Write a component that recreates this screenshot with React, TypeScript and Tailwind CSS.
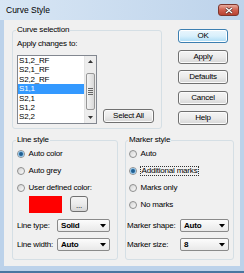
import React from "react";

function Btn({ label, primary = false, className = "" }: { label: string; primary?: boolean; className?: string }) {
  return (
    <div
      className={
        "h-[14px] flex items-center justify-center rounded-[3px] border " +
        (primary
          ? "border-[#3c7fb1] bg-linear-to-b from-[#eaf6fd] via-[#d9f0fc] to-[#a9dbf6] shadow-[inset_0_0_0_1px_#ffffff]"
          : "border-[#707070] bg-linear-to-b from-[#f4f4f4] via-[#ebebeb] to-[#d6d6d6] shadow-[inset_0_0_0_1px_#fbfbfb]") +
        " " +
        className
      }
    >
      {label}
    </div>
  );
}

function Radio({ checked = false }: { checked?: boolean }) {
  return (
    <span className="w-[8px] h-[8px] shrink-0 rounded-full border border-[#8e8f8f] bg-linear-to-br from-[#d4d4d4] to-[#fbfbfb] flex items-center justify-center">
      {checked && <span className="w-[4px] h-[4px] rounded-full bg-[#1f5e91] shadow-[0_0_0_1px_#8fc1e6]" />}
    </span>
  );
}

function Select({ value, className = "" }: { value: string; className?: string }) {
  return (
    <div
      className={
        "h-[13px] flex items-center rounded-[2px] border border-[#8a8a8a] bg-linear-to-b from-[#fcfcfc] to-[#e9e9e9] " + className
      }
    >
      <span className="flex-1 pl-[3px] font-bold">{value}</span>
      <svg width="6" height="4" viewBox="0 0 6 4" className="mr-[3px]">
        <path d="M0 0 H6 L3 3.5 Z" fill="#000" />
      </svg>
    </div>
  );
}

function RadioRow({ label, checked = false, focus = false, className = "" }: { label: string; checked?: boolean; focus?: boolean; className?: string }) {
  return (
    <div className={"h-[17px] flex items-center gap-[3.5px] " + className}>
      <Radio checked={checked} />
      {focus ? (
        <span className="border border-dotted border-[#333] px-[1px] -ml-[1px] leading-[8px]">{label}</span>
      ) : (
        <span>{label}</span>
      )}
    </div>
  );
}

const items = ["S1,2_RF", "S2,1_RF", "S2,2_RF", "S1,1", "S2,1", "S1,2", "S2,2"];

export default function App() {
  return (
    <div className="w-[244px] h-[273px] flex flex-col bg-[#bcd2ea] border-b-2 border-[#4a76a0] [font-family:'Liberation_Sans',Arial,sans-serif] text-[8px] tracking-[-0.2px] text-black leading-[10px] overflow-hidden">
      {/* Title bar */}
      <div className="h-[20px] shrink-0 flex items-center bg-linear-to-r from-[#d8e6f4] to-[#bdd3eb]">
        <span className="ml-[6px] text-[8.5px] tracking-normal">Curve Style</span>
        <div className="ml-auto mr-[5px] w-[21px] h-[12px] rounded-[3px] border border-[#7d362d] bg-linear-to-b from-[#e6aa9e] via-[#cf5f4f] to-[#b7402f] flex items-center justify-center">
          <svg width="8" height="7" viewBox="0 0 8 7">
            <path d="M1 1 L7 6 M7 1 L1 6" stroke="#4a2a26" strokeWidth="2.6" />
            <path d="M1 1 L7 6 M7 1 L1 6" stroke="#ffffff" strokeWidth="1.4" />
          </svg>
        </div>
      </div>

      {/* Client area */}
      <div className="mx-[4px] h-[246px] shrink-0 bg-[#f0f0f0] flex flex-col">
        {/* Top section */}
        <div className="flex">
          <fieldset className="ml-[8px] mt-[5px] w-[150px] h-[104px] border border-[#d5dfe5] rounded-[3px] px-[3px]">
            <legend className="px-[1px]">Curve selection</legend>
            <div className="mt-[4px] ml-[1px]">Apply changes to:</div>
            <div className="flex items-end mt-[6px]">
              <div className="ml-[1px] w-[80px] h-[69px] border border-[#828790] bg-white flex">
                <div className="flex-1 flex flex-col">
                  {items.map((it) => (
                    <div
                      key={it}
                      className={
                        "h-[9.4px] leading-[9.4px] pl-[1px] " + (it === "S1,1" ? "bg-[#3399ff] text-white" : "")
                      }
                    >
                      {it}
                    </div>
                  ))}
                </div>
                <div className="w-[12px] flex flex-col bg-[#ededed] border-l border-[#e4e4e4]">
                  <div className="h-[11px] flex items-center justify-center">
                    <svg width="5" height="3" viewBox="0 0 5 3">
                      <path d="M0 3 H5 L2.5 0 Z" fill="#333" />
                    </svg>
                  </div>
                  <div className="mt-[6px] mx-[1px] h-[37px] rounded-[2px] border border-[#979797] bg-linear-to-r from-[#f4f4f4] to-[#d9d9d9] flex flex-col items-center justify-center gap-[1px]">
                    <span className="w-[5px] h-[1px] bg-[#666]" />
                    <span className="w-[5px] h-[1px] bg-[#666]" />
                    <span className="w-[5px] h-[1px] bg-[#666]" />
                    <span className="w-[5px] h-[1px] bg-[#666]" />
                  </div>
                  <div className="flex-1" />
                  <div className="h-[11px] flex items-center justify-center">
                    <svg width="5" height="3" viewBox="0 0 5 3">
                      <path d="M0 0 H5 L2.5 3 Z" fill="#333" />
                    </svg>
                  </div>
                </div>
              </div>
              <Btn label="Select All" className="ml-[6px] mb-[1px] w-[51px]" />
            </div>
          </fieldset>

          <div className="ml-[16px] mt-[9px] w-[50px] flex flex-col gap-[6.5px]">
            <Btn label="OK" primary />
            <Btn label="Apply" />
            <Btn label="Defaults" />
            <Btn label="Cancel" />
            <Btn label="Help" />
          </div>
        </div>

        {/* Bottom section */}
        <div className="flex mt-[6px]">
          <fieldset className="ml-[8px] w-[106px] h-[125px] border border-[#d5dfe5] rounded-[3px] px-[4px]">
            <legend className="-ml-[1px] px-[1px]">Line style</legend>
            <RadioRow label="Auto color" checked />
            <RadioRow label="Auto grey" />
            <RadioRow label="User defined color:" />
            <div className="flex items-start">
              <div className="ml-[12px] w-[33px] h-[17px] bg-[#ff0000]" />
              <div className="ml-[8px] w-[18px] h-[16px] rounded-[3px] border border-[#707070] bg-linear-to-b from-[#f4f4f4] via-[#ebebeb] to-[#d6d6d6] flex items-end justify-center pb-[2px] leading-[6px]">
                ...
              </div>
            </div>
            <div className="mt-[6px] flex items-center">
              <span className="w-[40px]">Line type:</span>
              <Select value="Solid" className="w-[53px]" />
            </div>
            <div className="mt-[6px] flex items-center">
              <span className="w-[40px]">Line width:</span>
              <Select value="Auto" className="w-[53px]" />
            </div>
          </fieldset>

          <fieldset className="ml-[7px] w-[109px] h-[125px] border border-[#d5dfe5] rounded-[3px] px-[1px]">
            <legend className="ml-[1px] px-[1px]">Marker style</legend>
            <RadioRow label="Auto" className="ml-[2px]" />
            <RadioRow label="Additional marks" checked focus className="ml-[2px]" />
            <RadioRow label="Marks only" className="ml-[2px]" />
            <RadioRow label="No marks" className="ml-[2px]" />
            <div className="mt-[6px] flex items-center">
              <span className="w-[53px]">Marker shape:</span>
              <Select value="Auto" className="w-[49px]" />
            </div>
            <div className="mt-[6px] flex items-center">
              <span className="w-[53px]">Marker size:</span>
              <Select value="8" className="w-[49px]" />
            </div>
          </fieldset>
        </div>
      </div>
    </div>
  );
}
